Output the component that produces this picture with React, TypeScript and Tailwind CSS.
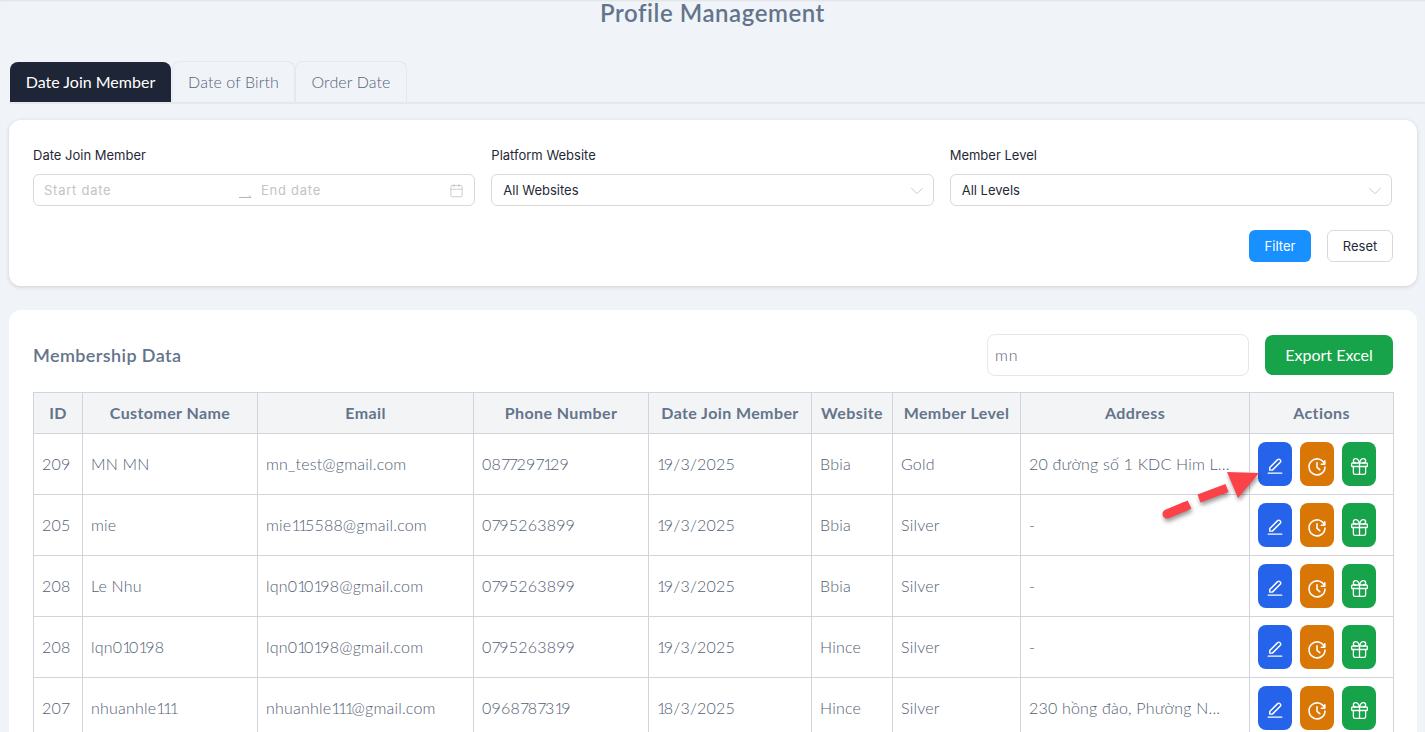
import { Calendar, ChevronDown, Gift } from 'lucide-react';

const rows = [
  { id: '209', name: 'MN MN', email: 'mn_test@gmail.com', phone: '0877297129', date: '19/3/2025', site: 'Bbia', level: 'Gold', address: '20 đường số 1 KDC Him L...' },
  { id: '205', name: 'mie', email: 'mie115588@gmail.com', phone: '0795263899', date: '19/3/2025', site: 'Bbia', level: 'Silver', address: '-' },
  { id: '208', name: 'Le Nhu', email: 'lqn010198@gmail.com', phone: '0795263899', date: '19/3/2025', site: 'Bbia', level: 'Silver', address: '-' },
  { id: '208', name: 'lqn010198', email: 'lqn010198@gmail.com', phone: '0795263899', date: '19/3/2025', site: 'Hince', level: 'Silver', address: '-' },
  { id: '207', name: 'nhuanhle111', email: 'nhuanhle111@gmail.com', phone: '0968787319', date: '18/3/2025', site: 'Hince', level: 'Silver', address: '230 hồng đào, Phường N...' },
];

// 1 and 7 sit much tighter in the original typeface
const Tight = ({ text }: { text: string }) => (
  <>
    {text.split(/([17])/).map((part, i) =>
      part === '1' ? (
        <span key={i} className="tracking-[-2.5px]">{part}</span>
      ) : part === '7' ? (
        <span key={i} className="tracking-[-1.5px]">{part}</span>
      ) : (
        part
      ),
    )}
  </>
);

const EditIcon = () => (
  <svg width="18" height="18" viewBox="0 0 24 24" fill="none" stroke="currentColor" strokeWidth="1.9" strokeLinecap="round" strokeLinejoin="round">
    <path d="M3 21.5h18" />
    <path d="M5 17.5v-3.5L15.5 3.5a2 2 0 0 1 3 0l.5.5a2 2 0 0 1 0 3L8.5 17.5Z" />
  </svg>
);

const HistoryIcon = () => (
  <svg width="22" height="22" viewBox="0 0 24 24" fill="none" stroke="currentColor" strokeWidth="1.7" strokeLinecap="round" strokeLinejoin="round">
    <path d="M20.5 6.2v3.8h-3.8" />
    <path d="M20 9.5A8.7 8.7 0 1 0 20.7 13" />
    <path d="M12 8.5v5l3 2.5" />
  </svg>
);

const RangeArrow = () => (
  <svg width="13" height="7" viewBox="0 0 13 7" fill="none" stroke="#b5b5b5" strokeWidth="1" className="mt-[10px]">
    <path d="M0 5.5h12L10 3.5" />
  </svg>
);

const cell = 'border border-[#d1d5db] px-2';

function App() {
  return (
    <div className="h-[732px] overflow-hidden bg-[#f0f4f9] shadow-[inset_0_2px_2px_-1px_rgba(0,0,0,0.08)] font-['Lato',sans-serif] relative">
      <h1 className="text-center text-2xl leading-[26px] font-semibold text-[#64748b] tracking-[0.55px]">Profile Management</h1>

      <div className="mt-[35px] ml-[9px] flex items-end border-b-2 border-[#e5e8ec] h-[43px]">
        <div className="h-[40px] w-[161px] ml-px flex items-center justify-center rounded-t-lg bg-[#1e2536] text-white text-base">Date Join Member</div>
        <div className="h-[41px] w-[123px] ml-px flex items-center justify-center rounded-t-lg border border-b-0 border-[#e5e8ec] text-[#566276] text-base font-light tracking-[0.1px]">Date of Birth</div>
        <div className="h-[41px] w-[112px] flex items-center justify-center rounded-t-lg border border-b-0 border-[#e5e8ec] text-[#566276] text-base font-light tracking-[0.1px]">Order Date</div>
      </div>

      <section className="mt-4 ml-[9px] mr-2 h-[166px] rounded-xl bg-white shadow-[0_1px_4px_rgba(0,0,0,0.15)] pt-6 pl-6 pr-[25px] font-['Inter',sans-serif]">
        <div className="grid grid-cols-3 gap-4">
          <div>
            <div className="text-[13px] leading-[22px] text-[#1f2937] mb-[8px]">Date Join Member</div>
            <div className="h-8 rounded-md border border-[#d9d9d9] flex items-center pt-px px-[10px] text-[13px] tracking-[0.75px] text-[#c4c4c4]">
              <span className="w-[195px]">Start date</span>
              <RangeArrow />
              <span className="ml-[9px] flex-1">End date</span>
              <Calendar size={15} strokeWidth={1.2} className="text-[#bdbdbd]" />
            </div>
          </div>
          <div>
            <div className="text-[13px] leading-[22px] text-[#1f2937] mb-[8px]">Platform Website</div>
            <div className="h-8 rounded-md border border-[#d9d9d9] flex items-center justify-between pt-px pl-[11px] pr-[5px] text-[13px] text-[#1f2937]">
              All Websites
              <ChevronDown size={22} strokeWidth={0.9} className="text-[#bdbdbd]" />
            </div>
          </div>
          <div>
            <div className="text-[13px] leading-[22px] text-[#1f2937] mb-[8px]">Member Level</div>
            <div className="h-8 rounded-md border border-[#d9d9d9] flex items-center justify-between pt-px pl-[11px] pr-[5px] text-[13px] text-[#1f2937]">
              All Levels
              <ChevronDown size={22} strokeWidth={0.9} className="text-[#bdbdbd]" />
            </div>
          </div>
        </div>
        <div className="mt-[24px] flex justify-end gap-4">
          <button className="h-8 w-[62px] pt-px rounded-md bg-[#1890ff] text-white text-[13px]">Filter</button>
          <button className="h-8 w-[66px] pt-px rounded-md border border-[#d9d9d9] text-[#1f2937] text-[13px] -mr-px">Reset</button>
        </div>
      </section>

      <section className="mt-6 ml-[9px] mr-2 rounded-xl bg-white px-6 pt-6 h-[500px]">
        <div className="flex items-center justify-between h-[42px]">
          <h2 className="text-lg font-semibold text-[#64748b] tracking-[0.4px]">Membership Data</h2>
          <div className="flex items-center gap-4">
            <div className="h-[42px] w-[262px] rounded-lg border border-[#e5e7eb] flex items-center px-[7px] text-base font-light text-[#566276] tracking-[0.8px]">mn</div>
            <button className="h-10 w-[128px] rounded-lg bg-[#16a34a] text-white text-base">Export Excel</button>
          </div>
        </div>

        <table className="mt-4 w-[1360px] table-fixed border-collapse text-base font-light text-[#526074] tracking-[0.2px]">
          <colgroup>
            <col className="w-[49px]" />
            <col className="w-[175px]" />
            <col className="w-[216px]" />
            <col className="w-[175px]" />
            <col className="w-[163px]" />
            <col className="w-[81px]" />
            <col className="w-[128px]" />
            <col className="w-[229px]" />
            <col className="w-[144px]" />
          </colgroup>
          <thead>
            <tr className="h-[41px] bg-[#f3f4f6]">
              {['ID', 'Customer Name', 'Email', 'Phone Number', 'Date Join Member', 'Website', 'Member Level', 'Address', 'Actions'].map((h) => (
                <th key={h} className="border border-[#d1d5db] font-bold text-base text-[#64748b] tracking-[0.4px] whitespace-nowrap">{h}</th>
              ))}
            </tr>
          </thead>
          <tbody>
            {rows.map((r, i) => (
              <tr key={i} className="h-[61px]">
                <td className={cell}>{r.id}</td>
                <td className={cell}><Tight text={r.name} /></td>
                <td className={cell}><Tight text={r.email} /></td>
                <td className={cell}><Tight text={r.phone} /></td>
                <td className={cell}><Tight text={r.date} /></td>
                <td className={cell}>{r.site}</td>
                <td className={cell}>{r.level}</td>
                <td className={cell}>{r.address}</td>
                <td className={cell}>
                  <div className="flex gap-2">
                    <button className="h-11 w-[34px] pt-1 rounded-lg bg-[#2563eb] text-white flex items-center justify-center"><EditIcon /></button>
                    <button className="h-11 w-[34px] pt-1 rounded-lg bg-[#d97706] text-white flex items-center justify-center"><HistoryIcon /></button>
                    <button className="h-11 w-[34px] pt-1 rounded-lg bg-[#16a34a] text-white flex items-center justify-center"><Gift size={21} strokeWidth={1.5} /></button>
                  </div>
                </td>
              </tr>
            ))}
          </tbody>
        </table>
      </section>

      <svg className="absolute left-[1155px] top-[465px] drop-shadow-[1px_3px_2px_rgba(0,0,0,0.4)]" width="105" height="60" viewBox="0 0 105 60" fill="none">
        <path d="M12 49L30 41.5" stroke="#fb4248" strokeWidth="9" strokeLinecap="round" />
        <path d="M28 42.5L34.5 39.5" stroke="#fb4248" strokeWidth="9" />
        <path d="M44 33.5L72 23" stroke="#fb4248" strokeWidth="8.5" />
        <path d="M72 7L104 8L83 33Z" fill="#fb4248" />
      </svg>
    </div>
  );
}

export default App;
